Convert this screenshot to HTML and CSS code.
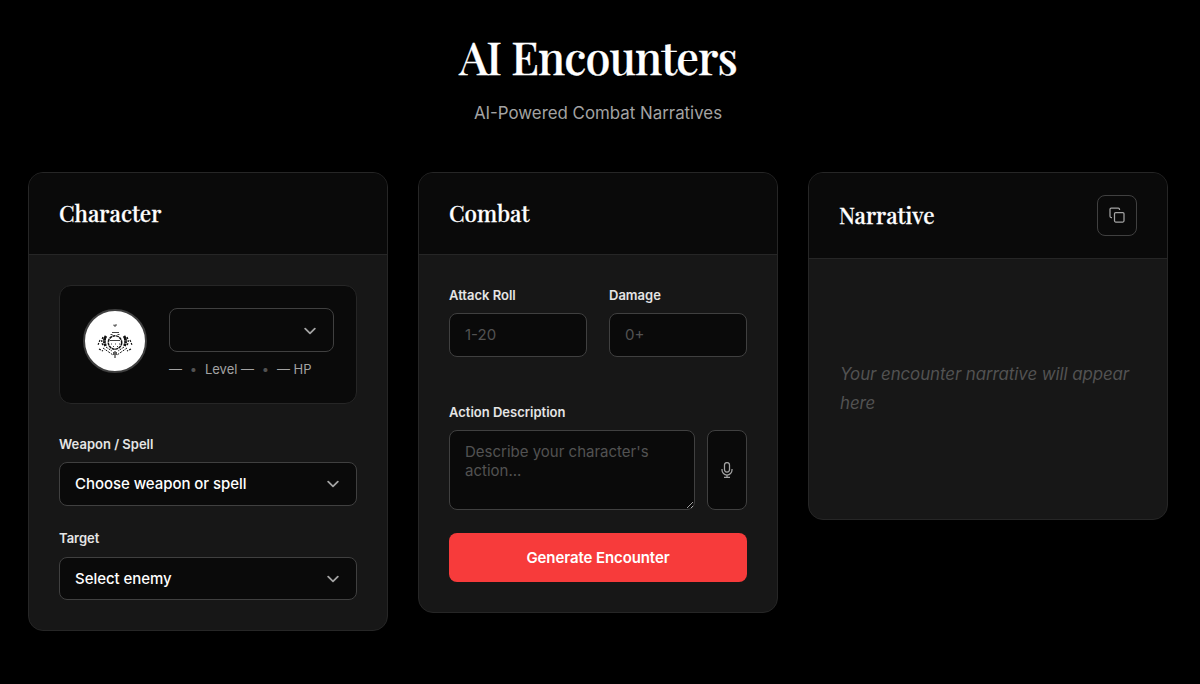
FILE: index.html
```html
<!DOCTYPE html>
<html lang="en">
<head>
<meta charset="utf-8">
<title>AI Encounters</title>
<link rel="stylesheet" href="styles.css">
</head>
<body>
<main class="page">
  <header class="hero">
    <h1 class="hero-title">AI Encounters</h1>
    <p class="hero-subtitle">AI-Powered Combat Narratives</p>
  </header>
  <div class="columns">
    <section class="card">
      <div class="card-header"><h2 class="card-title">Character</h2></div>
      <div class="card-body">
        <div class="profile">
          <div class="avatar">
            <svg width="60" height="60" viewBox="0 0 60 60" fill="none" stroke="#111">
              <circle cx="30" cy="31.500" r="6.700" stroke-width="1.500" stroke-dasharray="3 .6"/>
              <path d="M25 29.500h10M26 33h1m3 0h1m3 0h1M28 35.500h1m3 0h1" stroke-width=".8"/>
              <path d="M27 21.500h7M25.500 23.500h2m5 0h2M29 13.500v1.500h2v-2" stroke-width=".8"/>
              <path d="M21 25q-3 4-.5 10M39 25q3 4 .5 10" stroke-width="2.800" stroke-dasharray="5 .5 2 .5"/>
              <path d="M18 26q-2.500 5 0 8M42 26q2.500 5 0 8M15 29l-2 5M45 29l2 5M14 38l4 2M46 38l-4 2" stroke-width="1.200" stroke-dasharray="2 1.200"/>
              <path d="M18 37l10 7M42 37l-10 7M21 36l6 4M39 36l-6 4" stroke-width="1" stroke-dasharray="2 1.200"/>
              <path d="M30 40v7M28.800 41v3M31.200 41v3" stroke-width="1"/>
            </svg>
          </div>
          <div class="profile-info">
            <div class="select-box select-character"><span></span><svg class="chevron" width="12" height="8" viewBox="0 0 12 8"><path d="M1.200 1.700L6 6.300l4.800-4.600"/></svg></div>
            <div class="meta"><span>—</span><span class="dot">•</span><span>Level —</span><span class="dot">•</span><span>— HP</span></div>
          </div>
        </div>
        <div class="field">
          <div class="label">Weapon / Spell</div>
          <div class="select-box"><span>Choose weapon or spell</span><svg class="chevron" width="12" height="8" viewBox="0 0 12 8"><path d="M1.200 1.700L6 6.300l4.800-4.600"/></svg></div>
        </div>
        <div class="field field-target">
          <div class="label">Target</div>
          <div class="select-box"><span>Select enemy</span><svg class="chevron" width="12" height="8" viewBox="0 0 12 8"><path d="M1.200 1.700L6 6.300l4.800-4.600"/></svg></div>
        </div>
      </div>
    </section>
    <section class="card">
      <div class="card-header"><h2 class="card-title">Combat</h2></div>
      <div class="card-body">
        <div class="rolls">
          <div><label class="label" for="roll">Attack Roll</label><input class="input" id="roll" placeholder="1-20"></div>
          <div><label class="label" for="damage">Damage</label><input class="input" id="damage" placeholder="0+"></div>
        </div>
        <label class="label" for="action">Action Description</label>
        <div class="action-row">
          <textarea class="textarea" id="action" placeholder="Describe your character's action..."></textarea>
          <button class="icon-button mic" aria-label="Dictate">
            <svg width="12" height="16" viewBox="0 0 12 16"><rect x="3.500" y=".6" width="5" height="9.400" rx="2.500"/><path d="M1 7v1a5 5 0 0 0 10 0V7M6 13v2.400M3 15.400h6"/></svg>
          </button>
        </div>
        <button class="generate">Generate Encounter</button>
      </div>
    </section>
    <section class="card">
      <div class="card-header header-narrative">
        <h2 class="card-title">Narrative</h2>
        <button class="icon-button copy" aria-label="Copy">
          <svg width="16" height="16" viewBox="0 0 16 16"><rect x="5.500" y="5.500" width="9.500" height="9.500" rx="1.200"/><path d="M3 10.500H2.200A1.200 1.200 0 0 1 1 9.300V2.200A1.200 1.200 0 0 1 2.200 1h7.100a1.200 1.200 0 0 1 1.200 1.200V3"/></svg>
        </button>
      </div>
      <div class="narrative"><p class="narrative-text">Your encounter narrative will appear here</p></div>
    </section>
  </div>
</main>
</body>
</html>
```
FILE: styles.css
```css
* { box-sizing: border-box; }
body {
  margin: 0;
  background: #000;
  color: #fff;
  font-family: Inter, sans-serif;
}
h1, h2, p { margin: 0; }
button, input, textarea { font-family: inherit; margin: 0; }
.page { padding: 29px 32px 0 28px; }
.hero { height: 143px; text-align: center; }
.hero-title {
  font: 500 45px/54px "Playfair Display", "Liberation Serif", serif;
  letter-spacing: -0.9px;
  -webkit-text-stroke: 0.4px #fff;
}
.hero-subtitle {
  margin-top: 17px;
  font-size: 16.875px;
  line-height: 26px;
  color: #a3a3a3;
}
.columns {
  display: grid;
  grid-template-columns: repeat(3, 360px);
  gap: 30px;
  align-items: start;
}
.card {
  background: #171717;
  border: 1px solid #262626;
  border-radius: 15px;
  overflow: hidden;
}
.card-header {
  display: flex;
  align-items: center;
  height: 82px;
  padding: 0 30px;
  background: #0a0a0a;
  border-bottom: 1px solid #262626;
}
.header-narrative { height: 86px; justify-content: space-between; }
.card-title {
  padding-bottom: 2px;
  font: 500 22.5px/32px "Playfair Display", "Liberation Serif", serif;
  -webkit-text-stroke: 0.3px #fff;
}
.card-body { padding: 30px; }
.profile {
  display: flex;
  gap: 22px;
  height: 119px;
  padding: 22px;
  padding-left: 23px;
  background: #0a0a0a;
  border: 1px solid #262626;
  border-radius: 12px;
}
.avatar {
  flex: none;
  width: 64px;
  height: 64px;
  margin-top: 1px;
  border: 2px solid #404040;
  border-radius: 50%;
  background: #fff;
}
.avatar svg { display: block; }
.profile-info { flex: 1; }
.select-box {
  display: flex;
  align-items: center;
  justify-content: space-between;
  height: 44px;
  padding: 0 17px 1px 15px;
  background: #0a0a0a;
  border: 1px solid #404040;
  border-radius: 8px;
  font-size: 15px;
  font-weight: 500;
  letter-spacing: -0.05px;
}
.select-character { padding-bottom: 0; }
.chevron { margin-top: 1px; fill: none; stroke: #a3a3a3; stroke-width: 1.8; stroke-linecap: round; stroke-linejoin: round; }
.meta {
  display: flex;
  gap: 7.8px;
  margin-top: 7px;
  font-size: 13px;
  line-height: 20px;
  color: #a3a3a3;
  white-space: nowrap;
}
.dot { color: #525252; }
.label {
  display: block;
  margin-bottom: 8px;
  font-size: 13px;
  font-weight: 600;
  line-height: 20px;
  color: #e5e5e5;
}
.field { margin-top: 30px; }
.field-target { margin-top: 22px; }
.field-target .select-box { height: 43px; margin-top: 9px; padding-bottom: 0; }
.field-target .chevron { margin-top: 0; }
.rolls {
  display: grid;
  grid-template-columns: 1fr 1fr;
  gap: 22px;
  margin-bottom: 45px;
}
.input, .textarea {
  display: block;
  width: 100%;
  padding: 0 15px 2px;
  background: #0a0a0a;
  border: 1px solid #404040;
  border-radius: 8px;
  color: #fff;
  font-size: 15px;
}
.input { height: 44px; }
.input::placeholder, .textarea::placeholder { color: #525252; }
.action-row { display: flex; gap: 12px; }
.textarea { flex: 1; height: 80px; padding: 11px 15px; line-height: 19px; resize: vertical; }
.icon-button {
  display: flex;
  align-items: center;
  justify-content: center;
  width: 40px;
  padding: 0;
  background: #0a0a0a;
  border: 1px solid #404040;
  border-radius: 8px;
}
.icon-button svg { fill: none; stroke: #a3a3a3; stroke-width: 1.25; }
.mic { height: 80px; }
.copy { height: 41px; }
.copy svg { margin-top: -1px; }
.generate {
  display: block;
  width: 100%;
  height: 49px;
  margin-top: 23px;
  border: 0;
  border-radius: 8px;
  background: #f73b3b;
  color: #fff;
  font-size: 15px;
  font-weight: 600;
  letter-spacing: -0.1px;
}
.narrative {
  display: flex;
  align-items: center;
  height: 260px;
  padding: 0 30px 0 31px;
}
.narrative-text {
  font-size: 16.875px;
  line-height: 29px;
  font-style: italic;
  font-weight: 400;
  letter-spacing: -0.07px;
  color: #525252;
}
```
